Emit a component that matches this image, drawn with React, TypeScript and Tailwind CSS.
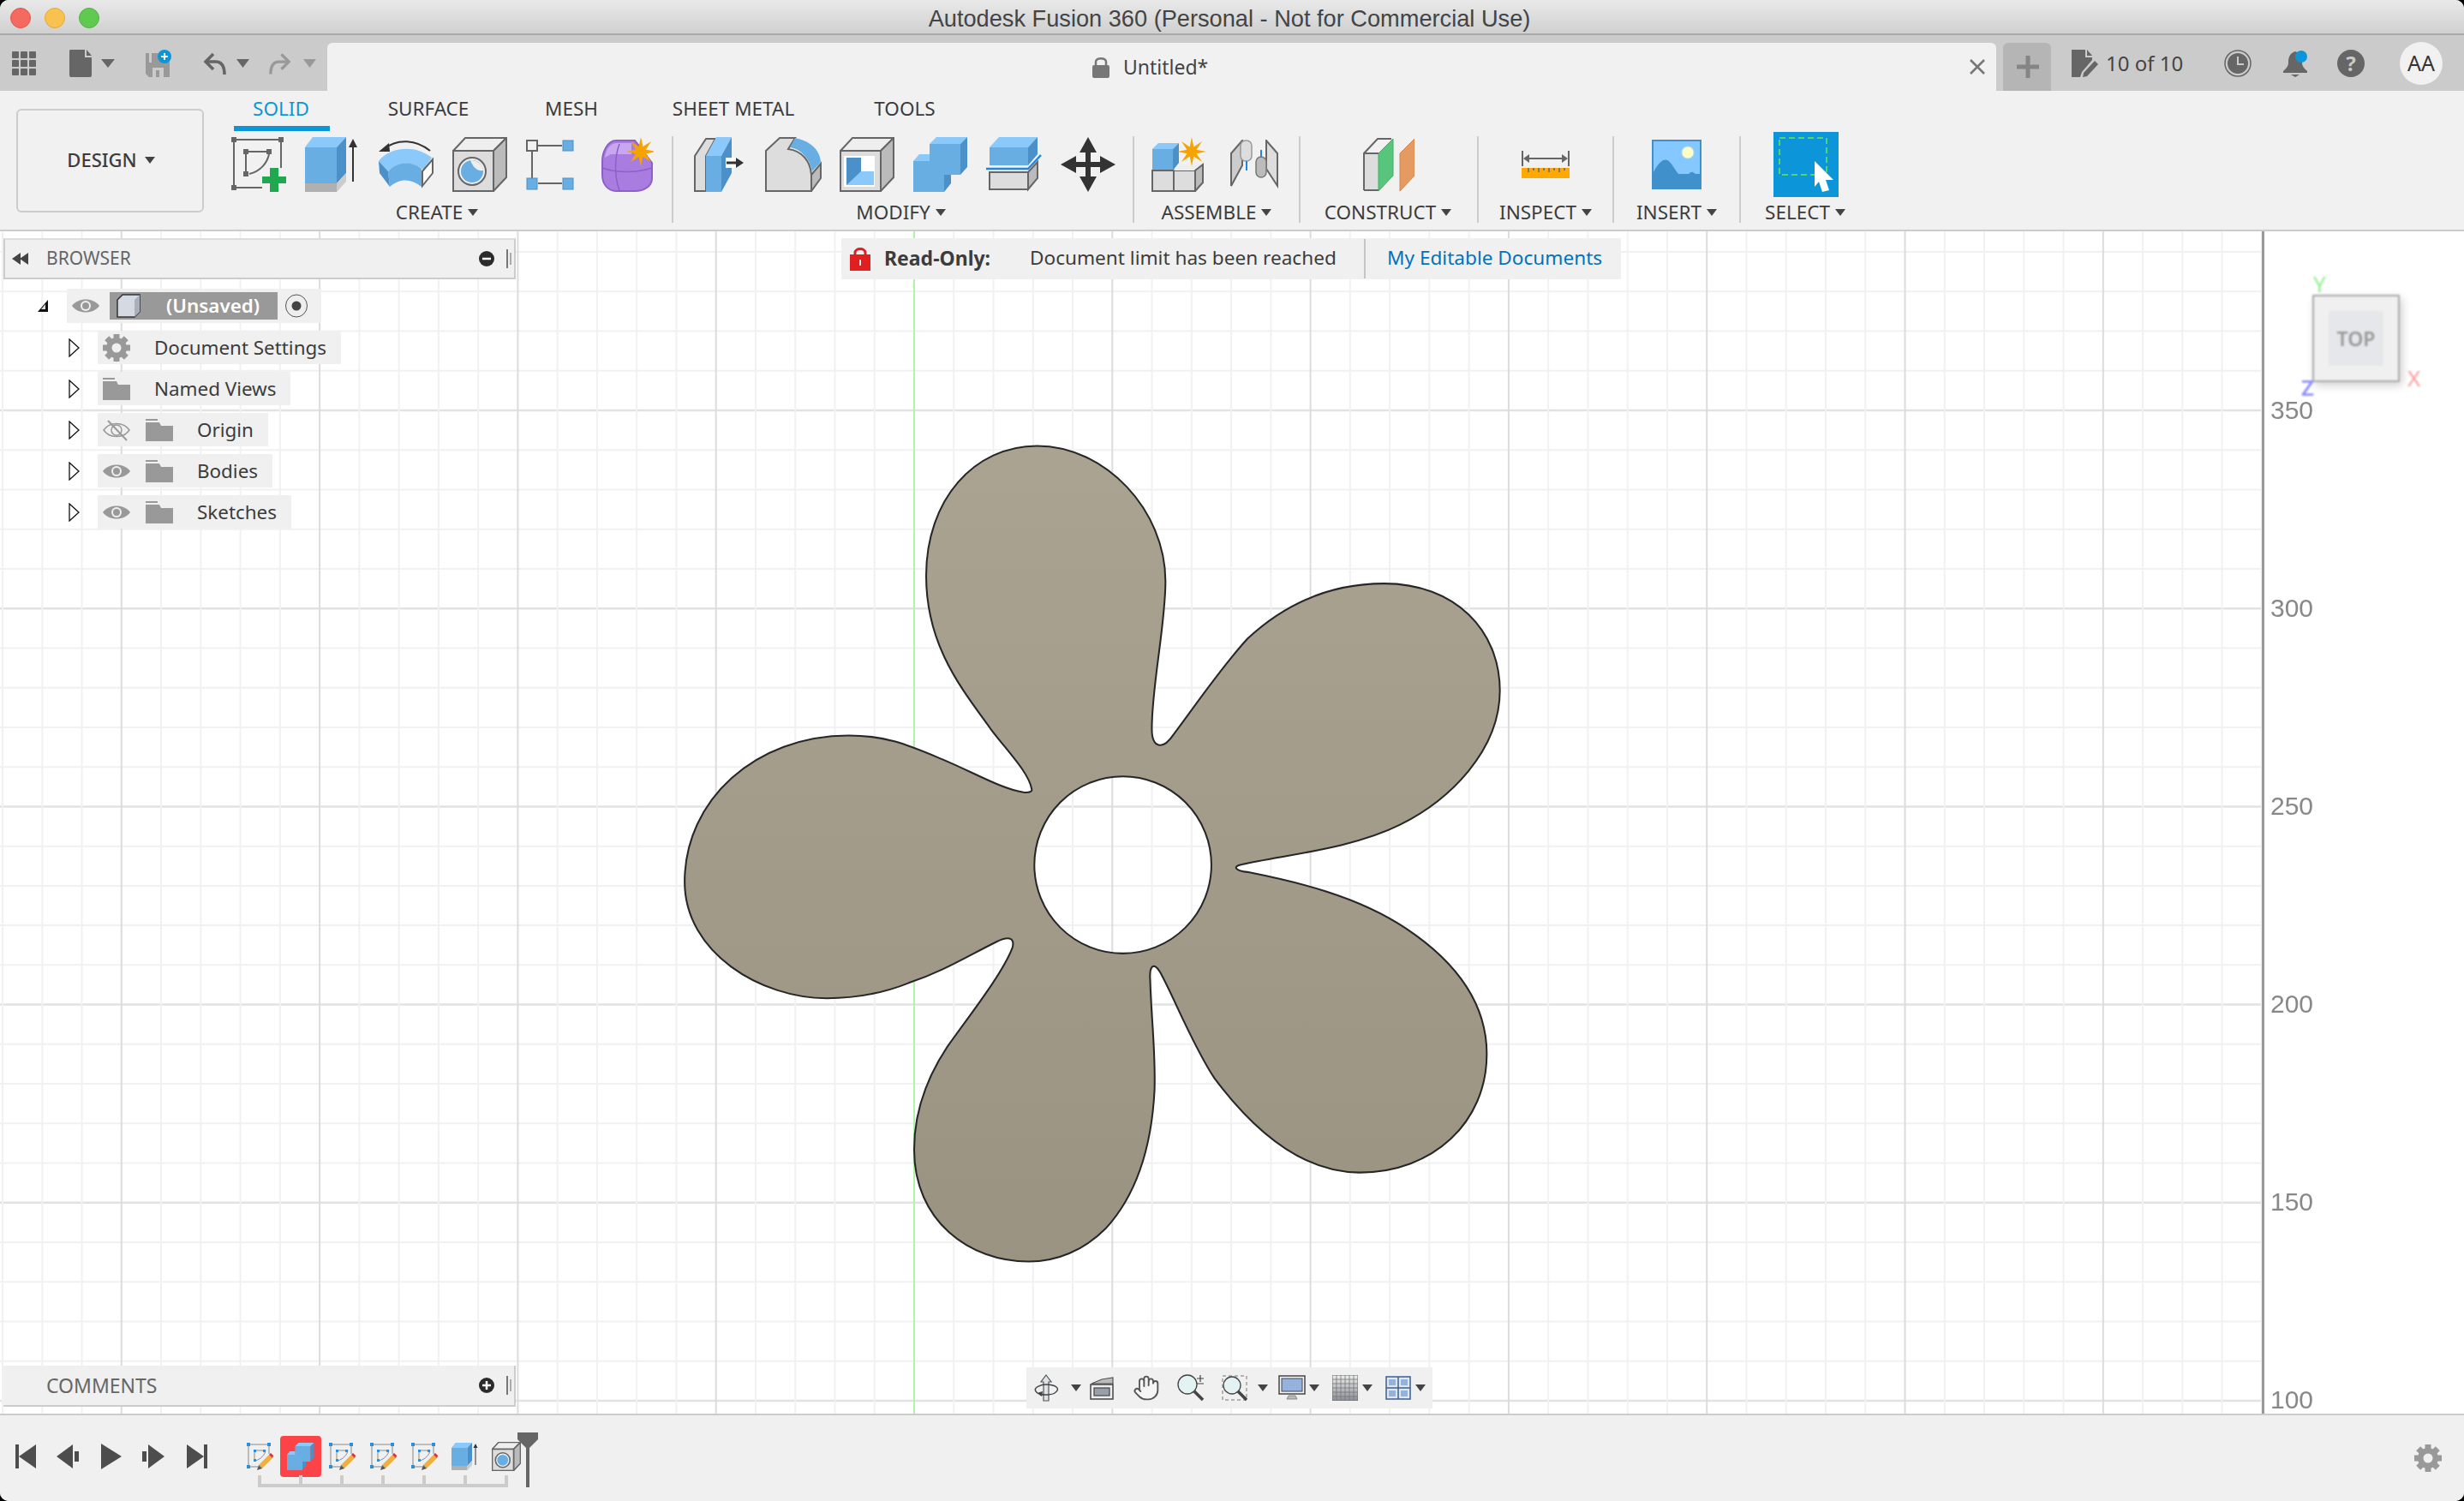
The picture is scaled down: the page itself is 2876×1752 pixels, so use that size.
import React from 'react';
import { Hand } from 'lucide-react';

const BLUE_L = '#8ac9f9';
const BLUE_M = '#69aee3';
const BLUE_D = '#4b90c9';

// grid lines of the sketch plane, in page coordinates (k % 5 === 0 is a major line)
const VERTICALS = Array.from({ length: 58 }, (_, i) => i - 23).map((k) => ({ k, x: 1067 + k * 46.26 })).filter((l) => l.x > 0 && l.x < 2641);
const HORIZONTALS = Array.from({ length: 32 }, (_, i) => i - 5).map((k) => ({ k, y: 479 + k * 46.24 })).filter((l) => l.y > 270 && l.y < 1650);
const SCALE = [
  { label: '350', top: 'top-[197px]' },
  { label: '300', top: 'top-[428px]' },
  { label: '250', top: 'top-[659px]' },
  { label: '200', top: 'top-[890px]' },
  { label: '150', top: 'top-[1121px]' },
  { label: '100', top: 'top-[1352px]' },
];

const starPoints = (cx: number, cy: number, r: number, inner: number, n: number) =>
  Array.from({ length: n * 2 }, (_, i) => {
    const a = (Math.PI * i) / n - Math.PI / 2;
    const q = i % 2 ? inner : r;
    return `${cx + q * Math.cos(a)},${cy + q * Math.sin(a)}`;
  }).join(' ');

const Caret = ({ w = 12, h = 8, color = '#444', className = '' }: { w?: number; h?: number; color?: string; className?: string }) => (
  <svg width={w} height={h} viewBox="0 0 12 8" preserveAspectRatio="none" className={className}>
    <polygon points="0,0 12,0 6,8" fill={color} />
  </svg>
);

const Gear = ({ size = 32, color = '#999' }: { size?: number; color?: string }) => (
  <svg width={size} height={size} viewBox="0 0 32 32">
    {[0, 45, 90, 135].map((a) => (
      <rect key={a} x="12.5" y="0" width="7" height="32" fill={color} transform={`rotate(${a} 16 16)`} />
    ))}
    <circle cx="16" cy="16" r="12" fill={color} />
    <circle cx="16" cy="16" r="5.5" fill="#f0f0f0" />
  </svg>
);

const Eye = () => (
  <svg width="32" height="24" viewBox="0 0 32 24">
    <path d="M0 12 C7 2 25 2 32 12 C25 22 7 22 0 12 Z" fill="#999" />
    <circle cx="16" cy="12" r="6" fill="#f0f0f0" />
    <circle cx="16" cy="12" r="4" fill="#999" />
  </svg>
);

const EyeOff = () => (
  <svg width="32" height="26" viewBox="0 0 32 26" fill="none" stroke="#999" strokeWidth="1.5">
    <path d="M1 13 C8 3 24 3 31 13 C24 23 8 23 1 13 Z" />
    <circle cx="16" cy="13" r="6" />
    <path d="M6 2 L28 25" strokeWidth="2" />
  </svg>
);

const Folder = () => (
  <svg width="32" height="26" viewBox="0 0 32 26">
    <path d="M0 0 H14 V2 H0 Z" fill="#999" />
    <path d="M0 4 H16 L18 8 H32 V26 H0 Z" fill="#999" />
  </svg>
);

const TreeArrow = () => (
  <svg width="13" height="22" viewBox="0 0 13 22">
    <polygon points="1,1 12,11 1,21" fill="#fff" stroke="#111" strokeWidth="1.3" />
  </svg>
);

const Cube = ({ w = 64, kind }: { w?: number; kind: 'hole' | 'shell' }) => (
  <svg width={w} height={64} viewBox="0 0 64 64">
    <polygon points="1,16 15,1 63,1 48,16" fill="#eee" stroke="#666" strokeWidth="2" />
    <polygon points="48,16 63,1 63,47 48,63" fill="#bbb" stroke="#666" strokeWidth="2" />
    <rect x="1" y="16" width="47" height="47" fill="#ddd" stroke="#666" strokeWidth="2" />
    {kind === 'hole' ? (
      <>
        <circle cx="23" cy="40" r="16" fill="#eee" stroke="#666" strokeWidth="2" />
        <circle cx="23" cy="40" r="13" fill={BLUE_M} />
        <path d="M21 27 C24 36 30 40 36 39 C36 33 30 27 21 27 Z" fill="#eee" />
      </>
    ) : (
      <>
        <rect x="5" y="22" width="36" height="36" fill="#fff" />
        <rect x="8" y="24" width="17" height="32" fill={BLUE_D} />
        <polygon points="8,56 25,40 40,40 40,56" fill={BLUE_L} />
      </>
    )}
  </svg>
);

const SketchIcon = () => (
  <svg width="64" height="64" viewBox="0 0 64 64" fill="none">
    <g fill="#666">
      <rect x="0" y="0" width="6" height="6" />
      <rect x="55" y="0" width="6" height="6" />
      <rect x="0" y="56" width="6" height="6" />
      <rect x="14" y="14" width="6" height="6" />
      <rect x="41" y="14" width="6" height="6" />
      <rect x="14" y="40" width="6" height="6" />
    </g>
    <path d="M6 3 H55 M3 6 V56 M58 6 V36 M6 59 H36 M20 17 H41 M17 20 V40 M21 43 C34 40 42 30 44 20" stroke="#666" strokeWidth="2" />
    <path d="M45 36 H55 V46 H64 V54 H55 V64 H45 V54 H36 V46 H45 Z" fill="#1fa84f" />
  </svg>
);

const ExtrudeIcon = ({ size = 64 }: { size?: number }) => (
  <svg width={size} height={size} viewBox="0 0 64 64">
    <polygon points="0,12 9,0 48,0 37,12" fill={BLUE_L} />
    <rect x="0" y="12" width="37" height="42" fill={BLUE_M} />
    <polygon points="37,12 48,0 48,42 37,54" fill={BLUE_D} />
    <polygon points="0,54 37,54 37,64 0,64" fill="#b0b0b0" />
    <polygon points="37,54 48,42 48,52 37,64" fill="#ccc" />
    <path d="M56 10 V52" stroke="#333" strokeWidth="2" />
    <polygon points="56,2 51,12 61,12" fill="#333" />
  </svg>
);

const RevolveIcon = () => (
  <svg width="64" height="64" viewBox="0 0 64 64">
    <path d="M6 14 C22 1 44 3 60 16" fill="none" stroke="#333" strokeWidth="2" />
    <polygon points="0,17 12,7 13,17" fill="#333" />
    <path d="M0 28 C12 12 42 8 62 24 L52 38 C40 28 22 28 11 40 Z" fill={BLUE_L} />
    <path d="M11 40 C22 28 40 28 50 37 L50 58 C38 48 24 48 13 58 Z" fill={BLUE_M} />
    <polygon points="0,28 11,40 13,58 1,42" fill={BLUE_D} />
    <polygon points="51,40 63,26 63,42 51,57" fill="#fff" stroke="#666" strokeWidth="2" />
  </svg>
);

const PatternIcon = () => (
  <svg width="56" height="60" viewBox="0 0 56 60" className="-translate-x-[4px]">
    <path d="M14 8 H42 M7 15 V46 M14 52 H42" stroke="#666" strokeWidth="2" />
    <rect x="1" y="2" width="12" height="12" fill="#f1f1f1" stroke="#666" strokeWidth="2" />
    <rect x="43" y="2" width="12" height="12" fill={BLUE_M} stroke={BLUE_D} strokeWidth="1" />
    <rect x="1" y="46" width="12" height="13" fill={BLUE_M} stroke={BLUE_D} strokeWidth="1" />
    <rect x="43" y="46" width="12" height="13" fill={BLUE_M} stroke={BLUE_D} strokeWidth="1" />
  </svg>
);

const FormIcon = () => (
  <svg width="62" height="64" viewBox="0 0 62 64">
    <path d="M2 28 C2 18 8 4 18 4 H40 L60 30 V48 C60 58 50 63 40 63 H18 C8 63 2 54 2 44 Z" fill="#a97de0" stroke="#8e5fc8" strokeWidth="2" />
    <path d="M5 24 C7 10 14 7 20 7 H36 V20 H12 Z" fill="#c7a8f0" />
    <path d="M2 36 C20 42 40 42 60 36 M22 8 C16 24 16 46 22 62" fill="none" stroke="#8e5fc8" strokeWidth="1.5" />
    <polygon points={starPoints(47, 17, 17, 6.5, 8)} fill="#f5a300" />
  </svg>
);

const PressPullIcon = () => (
  <svg width="60" height="64" viewBox="0 0 60 64">
    <path d="M1 63 V22 L14 2 H25 L14 22 V63 Z" fill="#ddd" stroke="#666" strokeWidth="2" />
    <polygon points="14,22 26,0 44,0 32,22" fill={BLUE_L} />
    <rect x="14" y="22" width="18" height="42" fill={BLUE_M} />
    <polygon points="32,22 44,0 44,42 32,64" fill={BLUE_D} />
    <rect x="37" y="24" width="14" height="12" fill="#fff" />
    <path d="M38 30 H51" stroke="#333" strokeWidth="3" />
    <polygon points="49,24 58,30 49,36" fill="#333" />
  </svg>
);

const FilletIcon = () => (
  <svg width="68" height="64" viewBox="0 0 68 64">
    <path d="M2 63 V16 L18 1 H36 L28 14 C44 16 54 28 55 44 V63 Z" fill="#ddd" stroke="#666" strokeWidth="2" />
    <polygon points="55,44 66,31 66,48 55,63" fill="#bbb" stroke="#666" strokeWidth="2" />
    <path d="M30 12 L36 1 C52 4 65 14 66 29 L56 40 C53 25 43 14 30 12 Z" fill={BLUE_M} />
  </svg>
);

const CombineIcon = ({ size = 64 }: { size?: number }) => (
  <svg width={size} height={size} viewBox="0 0 64 64">
    <polygon points="19,8 27,0 63,0 55,8" fill={BLUE_L} />
    <rect x="19" y="8" width="36" height="36" fill={BLUE_M} />
    <polygon points="55,8 63,0 63,35 55,44" fill={BLUE_D} />
    <polygon points="0,28 7,20 19,20 19,28" fill={BLUE_L} />
    <rect x="0" y="28" width="36" height="36" fill={BLUE_M} />
    <polygon points="36,44 44,44 44,54 36,64" fill={BLUE_D} />
  </svg>
);

const SplitIcon = () => (
  <svg width="66" height="64" viewBox="0 0 66 64">
    <polygon points="4,12 15,0 60,0 49,12" fill={BLUE_L} />
    <rect x="4" y="12" width="45" height="21" fill={BLUE_M} />
    <polygon points="49,12 60,0 60,20 49,33" fill={BLUE_D} />
    <path d="M0 37 H49 L64 21" fill="none" stroke="#1e88e0" strokeWidth="2.5" />
    <path d="M49 41 L60 29 V48 L49 61 Z" fill="#bbb" stroke="#666" strokeWidth="2" />
    <rect x="4" y="41" width="45" height="20" fill="#ddd" stroke="#666" strokeWidth="2" />
  </svg>
);

const MoveIcon = () => (
  <svg width="64" height="64" viewBox="0 0 64 64">
    <path d="M32 0 L42 18 H35 V29 H46 V22 L64 32 L46 42 V35 H35 V46 H42 L32 64 L22 46 H29 V35 H18 V42 L0 32 L18 22 V29 H29 V18 H22 Z" fill="#333" />
  </svg>
);

const AssembleIcon = () => (
  <svg width="64" height="64" viewBox="0 0 64 64">
    <polygon points="1,14 8,7 32,7 25,14" fill={BLUE_L} />
    <rect x="1" y="14" width="24" height="25" fill={BLUE_M} />
    <polygon points="25,14 32,7 32,30 25,39" fill={BLUE_D} />
    <rect x="1" y="39" width="25" height="24" fill="#ddd" stroke="#666" strokeWidth="2" />
    <rect x="26" y="39" width="25" height="24" fill="#ddd" stroke="#666" strokeWidth="2" />
    <polygon points="26,39 35,32 60,32 51,39" fill="#eee" />
    <polygon points="51,39 60,32 60,53 51,63" fill="#bbb" stroke="#666" strokeWidth="2" />
    <polygon points={starPoints(47, 17, 17, 6, 8)} fill="#f5a300" />
  </svg>
);

const JointIcon = () => (
  <svg width="56" height="58" viewBox="0 0 56 58">
    <polygon points="1,16 14,1 14,30 1,54" fill="#ccc" stroke="#666" strokeWidth="2" />
    <rect x="12" y="1" width="13" height="24" rx="6" fill="#ddd" stroke="#999" strokeWidth="1.5" />
    <path d="M19 25 V36 M36 12 V26" stroke="#1e88e0" strokeWidth="2" />
    <polygon points="55,16 42,1 42,34 55,54" fill="#ddd" stroke="#666" strokeWidth="2" />
    <rect x="30" y="20" width="12" height="24" rx="6" fill="#bbb" stroke="#777" strokeWidth="1.5" />
  </svg>
);

const ConstructIcon = () => (
  <svg width="60" height="62" viewBox="0 0 60 62">
    <path d="M1 61 V18 L17 1 H33" fill="none" stroke="#666" strokeWidth="2" />
    <rect x="2" y="18" width="16" height="42" fill="#ddd" />
    <path d="M1 61 H18" stroke="#666" strokeWidth="2" />
    <path d="M1 18 H18" stroke="#666" strokeWidth="2" />
    <polygon points="18,18 35,1 35,44 18,62" fill="#57c67c" stroke="#3fae64" strokeWidth="1" />
    <polygon points="43,18 60,1 60,44 43,62" fill="#e59a62" stroke="#cf8750" strokeWidth="1" />
  </svg>
);

const InspectIcon = () => (
  <svg width="56" height="32" viewBox="0 0 56 32">
    <path d="M1 0 V18 M55 0 V18 M6 9 H50" stroke="#666" strokeWidth="2" />
    <polygon points="2,9 9,4 9,14" fill="#666" />
    <polygon points="54,9 47,4 47,14" fill="#666" />
    <rect x="0" y="20" width="56" height="12" fill="#ffa900" />
    <path d="M8 20 V25 M14 20 V23 M20 20 V25 M26 20 V23 M32 20 V25 M38 20 V23 M44 20 V25 M50 20 V23" stroke="#666" strokeWidth="1.5" />
  </svg>
);

const InsertIcon = () => (
  <svg width="58" height="58" viewBox="0 0 58 58">
    <rect x="0" y="0" width="58" height="58" fill="#4090cc" />
    <rect x="2" y="2" width="54" height="38" fill="#85c8ff" />
    <path d="M2 38 C8 26 14 22 18 24 C24 26 30 44 38 44 C42 44 44 36 48 38 C52 40 54 44 56 46 V58 H2 Z" fill="#4090cc" />
    <circle cx="42" cy="15" r="7" fill="#ffffc8" stroke="#b8dcf0" strokeWidth="1" />
  </svg>
);

const SelectIcon = () => (
  <svg width="76" height="76" viewBox="0 0 76 76">
    <rect x="0" y="0" width="76" height="76" fill="#0c96d9" />
    <rect x="7" y="7" width="55" height="43" fill="none" stroke="#55d46a" strokeWidth="2" strokeDasharray="7 4" />
    <polygon points="48,34 70,56 61,56 65,68 57,70 53,58 48,64" fill="#fff" />
  </svg>
);

// small sketch marker used on the timeline
const TimelineSketch = () => (
  <svg width="32" height="34" viewBox="0 0 32 34" fill="none">
    <path d="M3 3 H27 M3 3 V29 M27 3 V14 M3 29 H14 M10 10 H21 M10 10 V21 M11 22 C18 20 22 15 23 10" stroke="#888" strokeWidth="1" />
    <g fill="#2b8fe0">
      <rect x="1" y="1" width="4" height="4" />
      <rect x="25" y="1" width="4" height="4" />
      <rect x="1" y="27" width="4" height="4" />
      <rect x="9" y="9" width="3" height="3" />
      <rect x="20" y="9" width="3" height="3" />
      <rect x="9" y="20" width="3" height="3" />
    </g>
    <path d="M15 27 L27 15 L31 19 L19 31 Z" fill="#f0b040" />
    <path d="M27 15 L29 13 L32 16 L31 19 Z" fill="#e62b2b" />
    <path d="M15 27 L19 31 L13 33 Z" fill="#555" />
  </svg>
);

const TimelineHole = () => (
  <svg width="34" height="34" viewBox="0 0 64 64">
    <polygon points="1,16 15,1 63,1 48,16" fill="#eee" stroke="#666" strokeWidth="3" />
    <polygon points="48,16 63,1 63,47 48,63" fill="#bbb" stroke="#666" strokeWidth="3" />
    <rect x="1" y="16" width="47" height="47" fill="#ddd" stroke="#666" strokeWidth="3" />
    <circle cx="24" cy="40" r="16" fill="#eee" stroke="#666" strokeWidth="3" />
    <circle cx="24" cy="40" r="12" fill={BLUE_M} />
  </svg>
);

const TitleBar = () => (
  <div className="grid grid-cols-[1fr_auto_1fr] items-center h-[41px] shrink-0 border-b-2 border-[#a9a9a9] bg-gradient-to-b from-[#e9e9e9] to-[#d0d0d0]">
    <div className="flex gap-[16px] pl-[12px]">
      <span className="w-[24px] h-[24px] rounded-full bg-[#f46a60] border border-[#e0554b]" />
      <span className="w-[24px] h-[24px] rounded-full bg-[#f9c14f] border border-[#e2a93c]" />
      <span className="w-[24px] h-[24px] rounded-full bg-[#60c94f] border border-[#4fb53f]" />
    </div>
    <div className="font-['Liberation_Sans',sans-serif] text-[27.2px] text-[#444] pr-[6px] pt-[2px]">Autodesk Fusion 360 (Personal - Not for Commercial Use)</div>
    <div />
  </div>
);

const TabBar = () => (
  <div className="flex items-center h-[65px] shrink-0 bg-[#cbcbcb]">
    <div className="flex items-center w-[382px] pl-[14px]">
      <svg width="28" height="28" viewBox="0 0 28 28" fill="#666">
        {[0, 10, 20].map((y) =>
          [0, 10, 20].map((x) => <rect key={`${x}-${y}`} x={x} y={y} width="8" height="8" rx="1" />)
        )}
      </svg>
      <svg width="26" height="32" viewBox="0 0 26 32" className="ml-[39px]">
        <path d="M1 0 H18 V9 H26 V30 Q26 32 24 32 H2 Q0 32 0 30 V1 Z" fill="#666" />
        <polygon points="20,0 26,7 20,7" fill="#666" />
      </svg>
      <Caret w={16} h={10} color="#666" className="ml-[11px]" />
      <svg width="30" height="32" viewBox="0 0 30 32" className="ml-[36px]">
        <path d="M0 4 H24 L28 8 V32 H4 L0 28 Z" fill="#999" />
        <rect x="8" y="21" width="13" height="11" fill="#cbcbcb" />
        <rect x="12" y="24" width="4" height="8" fill="#999" />
        <rect x="4" y="4" width="3" height="11" fill="#cbcbcb" />
        <circle cx="22" cy="8" r="8" fill="#0c96d9" />
        <path d="M22 4 V12 M18 8 H26" stroke="#fff" strokeWidth="2" />
      </svg>
      <svg width="27" height="26" viewBox="0 0 27 26" fill="none" stroke="#666" strokeWidth="3.5" className="ml-[37px]">
        <path d="M12 2 L3 11 L12 20" />
        <path d="M3 11 H15 Q25 11 25 26" />
      </svg>
      <Caret w={15} h={10} color="#666" className="ml-[12px]" />
      <svg width="26" height="26" viewBox="0 0 27 26" fill="none" stroke="#999" strokeWidth="3.5" className="ml-[23px]">
        <path d="M15 2 L24 11 L15 20" />
        <path d="M24 11 H12 Q2 11 2 26" />
      </svg>
      <Caret w={15} h={10} color="#999" className="ml-[14px]" />
    </div>
    <div className="flex items-center w-[1948px] h-[56px] self-end rounded-t-[6px] bg-[#f1f1f1]">
      <svg width="24" height="26" viewBox="0 0 24 26" className="ml-[891px]" fill="none">
        <path d="M6 12 V7 C6 2 18 2 18 7 V12" stroke="#777" strokeWidth="2.5" />
        <rect x="2" y="11" width="20" height="15" rx="2" fill="#777" />
      </svg>
      <span className="ml-[14px] text-[23px] text-[#444]">Untitled*</span>
      <svg width="18" height="18" viewBox="0 0 18 18" className="ml-auto mr-[13px]">
        <path d="M1 1 L17 17 M17 1 L1 17" stroke="#777" strokeWidth="2.5" />
      </svg>
    </div>
    <div className="flex items-center justify-center w-[56px] h-[56px] ml-[8px] self-end rounded-t-[6px] bg-[#b5b5b5]">
      <svg width="26" height="26" viewBox="0 0 26 26" className="translate-x-[1px]">
        <path d="M13 0 V26 M0 13 H26" stroke="#858585" strokeWidth="5" />
      </svg>
    </div>
    <svg width="32" height="32" viewBox="0 0 32 32" className="ml-[24px]">
      <path d="M0 0 H16 V9 H24 V12 L12 26 L10 32 H0 Z" fill="#666" />
      <polygon points="18,0 24,7 18,7" fill="#666" />
      <path d="M27 13 L31 17 L18 31 L13 32 L14 27 Z" fill="#666" />
    </svg>
    <span className="ml-[8px] w-[90px] text-[24px] text-[#444] whitespace-nowrap">10 of 10</span>
    <svg width="32" height="32" viewBox="0 0 32 32" className="ml-[48px]" fill="none">
      <circle cx="16" cy="16" r="15" stroke="#666" strokeWidth="1.5" />
      <circle cx="16" cy="16" r="12" fill="#666" />
      <path d="M16 8 V17 H23" stroke="#cbcbcb" strokeWidth="2" />
    </svg>
    <svg width="28" height="32" viewBox="0 0 28 32" className="ml-[37px]">
      <path d="M14 2 C7 4 6 10 6 15 C6 20 3 22 0 25 V27 H28 V25 C25 22 22 20 22 15 C22 10 21 4 14 2 Z" fill="#666" />
      <path d="M9 29 H19 L14 32 Z" fill="#666" />
      <circle cx="21" cy="8" r="7" fill="#0c96d9" />
    </svg>
    <div className="ml-[35px] flex items-center justify-center w-[32px] h-[32px] rounded-full bg-[#666] text-[24px] font-bold text-[#cbcbcb]">?</div>
    <div className="ml-[41px] flex items-center justify-center w-[50px] h-[50px] rounded-full bg-[#f1f1f1] text-[25px] text-[#333]">AA</div>
  </div>
);

const GroupLabel = ({ label, className = '' }: { label: string; className?: string }) => (
  <div className={`flex items-center justify-center gap-[6px] h-[28px] mt-[9px] text-[22.5px] leading-none ${className}`}>
    {label}
    <Caret w={12} h={8} />
  </div>
);

const Divider = () => <div className="w-[2px] h-full bg-[#ccc] shrink-0" />;

const Ribbon = () => (
  <div className="flex h-[164px] shrink-0 border-b-2 border-[#ccc] bg-[#f1f1f1]">
    <div className="flex items-center justify-center gap-[9px] ml-[19px] mt-[21px] w-[219px] h-[121px] pb-[2px] pl-[2px] rounded-[6px] border-2 border-[#ccc] text-[22px] font-medium">
      DESIGN
      <Caret w={12} h={8} />
    </div>
    <div className="flex flex-col ml-[20px]">
      <div className="flex h-[47px] pl-[15px] text-[22.5px]">
        <div className="flex items-center justify-center w-[112px] pt-[1px] pr-[2px] border-b-[6px] border-[#0a96d8] text-[#0a96d8]">SOLID</div>
        <div className="flex items-center justify-center w-[120px] ml-[55px] pb-[5px]">SURFACE</div>
        <div className="flex items-center justify-center w-[114px] ml-[50px] pb-[5px]">MESH</div>
        <div className="flex items-center justify-center w-[172px] ml-[46px] pb-[5px]">SHEET METAL</div>
        <div className="flex items-center justify-center w-[112px] ml-[58px] pb-[5px]">TOOLS</div>
      </div>
      <div className="flex h-[101px] mt-[6px]">
        <div className="w-[526px]">
          <div className="grid grid-cols-[repeat(6,86px)] items-center justify-items-center h-[66px] pl-px">
            <SketchIcon />
            <ExtrudeIcon />
            <RevolveIcon />
            <Cube kind="hole" />
            <PatternIcon />
            <FormIcon />
          </div>
          <GroupLabel label="CREATE" className="pr-[22px]" />
        </div>
        <Divider />
        <div className="w-[536px]">
          <div className="grid grid-cols-[repeat(6,86px)] items-center justify-items-center h-[66px] pl-[11px]">
            <PressPullIcon />
            <FilletIcon />
            <Cube kind="shell" />
            <CombineIcon />
            <SplitIcon />
            <MoveIcon />
          </div>
          <GroupLabel label="MODIFY" className="pr-[5px]" />
        </div>
        <Divider />
        <div className="w-[192px]">
          <div className="grid grid-cols-[repeat(2,88px)] items-center justify-items-center h-[66px] pl-[8px]">
            <AssembleIcon />
            <JointIcon />
          </div>
          <GroupLabel label="ASSEMBLE" />
        </div>
        <Divider />
        <div className="w-[206px]">
          <div className="flex items-center justify-center h-[66px]"><ConstructIcon /></div>
          <GroupLabel label="CONSTRUCT" className="pr-[2px]" />
        </div>
        <Divider />
        <div className="w-[156px]">
          <div className="flex items-center justify-center h-[66px]"><InspectIcon /></div>
          <GroupLabel label="INSPECT" />
        </div>
        <Divider />
        <div className="w-[146px]">
          <div className="flex items-center justify-center h-[66px]"><InsertIcon /></div>
          <GroupLabel label="INSERT" />
        </div>
        <Divider />
        <div className="w-[152px]">
          <div className="flex items-center justify-center h-[66px]"><SelectIcon /></div>
          <GroupLabel label="SELECT" className="pr-[2px]" />
        </div>
      </div>
    </div>
  </div>
);

const PanelHandle = ({ plus }: { plus?: boolean }) => (
  <div className="flex items-center ml-auto">
    <svg width="18" height="18" viewBox="0 0 18 18">
      <circle cx="9" cy="9" r="9" fill="#2b2b2b" />
      <path d={plus ? 'M4 9 H14 M9 4 V14' : 'M4 9 H14'} stroke="#fff" strokeWidth="2.5" />
    </svg>
    <div className="flex gap-[2px] ml-[14px] mr-[3px]">
      <span className="w-[2px] h-[22px] bg-[#777]" />
      <span className="w-[2px] h-[14px] mt-[4px] bg-[#aaa]" />
    </div>
  </div>
);

const TreeRow = ({ children }: { children: React.ReactNode }) => (
  <div className="flex items-center h-[39px] mb-[9px]">
    <div className="ml-[76px] w-[13px] flex"><TreeArrow /></div>
    <div className="flex items-center h-full ml-[21px] pl-[6px] pr-[17px] bg-[#f0f0f0] text-[22.4px]">{children}</div>
  </div>
);

const BrowserPanel = () => (
  <div className="absolute left-[4px] top-[8px] w-[598px]">
    <div className="flex items-center h-[48px] border-2 border-[#ccc] border-t-[#ddd] bg-[#f0f0f0] text-[21px] text-[#666]">
      <svg width="20" height="14" viewBox="0 0 20 14" className="ml-[8px]">
        <polygon points="0,7 10,0 10,14" fill="#444" />
        <polygon points="9,7 19,0 19,14" fill="#444" />
      </svg>
      <span className="ml-[20px]">BROWSER</span>
      <PanelHandle />
    </div>
    <div className="flex items-center h-[40px] mt-[11px] mb-[9px]">
      <svg width="14" height="16" viewBox="0 0 14 16" className="ml-[39px]">
        <polygon points="13,1 13,15 1,15" fill="#111" />
        <polygon points="10,6 10,12 5,12" fill="#ddd" />
      </svg>
      <div className="flex items-center h-full w-[297px] ml-[21px] pl-[6px] bg-[#f0f0f0]">
        <Eye />
        <div className="flex items-center h-[32px] w-[196px] ml-[12px] bg-[#999] text-[22.4px] font-semibold text-white">
          <svg width="28" height="28" viewBox="0 0 28 28" className="ml-[8px]">
            <path d="M1 7 L7 1 H27 V21 L21 27 H1 Z" fill="#d5dae2" stroke="#333" strokeWidth="1.5" />
            <path d="M21 7 L27 1 V21 L21 27 Z" fill="#aab0bb" />
          </svg>
          <span className="ml-[30px]">(Unsaved)</span>
        </div>
        <svg width="26" height="28" viewBox="0 0 26 28" className="ml-[9px]">
          <ellipse cx="13" cy="14" rx="12.5" ry="13" fill="#eee" stroke="#555" strokeWidth="1" />
          <circle cx="13" cy="14" r="5.5" fill="#444" />
        </svg>
      </div>
    </div>
    <TreeRow>
      <Gear />
      <span className="ml-[28px]">Document Settings</span>
    </TreeRow>
    <TreeRow>
      <Folder />
      <span className="ml-[28px]">Named Views</span>
    </TreeRow>
    <TreeRow>
      <EyeOff />
      <span className="ml-[18px]"><Folder /></span>
      <span className="ml-[28px]">Origin</span>
    </TreeRow>
    <TreeRow>
      <Eye />
      <span className="ml-[18px]"><Folder /></span>
      <span className="ml-[28px]">Bodies</span>
    </TreeRow>
    <TreeRow>
      <Eye />
      <span className="ml-[18px]"><Folder /></span>
      <span className="ml-[28px]">Sketches</span>
    </TreeRow>
  </div>
);

const ReadOnlyBanner = () => (
  <div className="absolute left-[982px] top-[8px] flex items-center w-[910px] h-[48px] bg-[#f0f0f0] text-[22.6px]">
    <svg width="24" height="28" viewBox="0 0 24 28" className="ml-[10px]" fill="none">
      <path d="M6 11 V7 C6 1 18 1 18 7 V11" stroke="#e02020" strokeWidth="3" />
      <rect x="0" y="9" width="24" height="19" fill="#e02020" />
      <rect x="11" y="15" width="2" height="7" fill="#fff" />
    </svg>
    <span className="ml-[16px] mb-[2px] font-bold w-[170px] text-[23px]">Read-Only:</span>
    <span className="mb-[2px] w-[390px]">Document limit has been reached</span>
    <div className="w-[2px] h-[46px] bg-[#c4c4c4]" />
    <span className="ml-[25px] mb-[2px] text-[#0073ba]">My Editable Documents</span>
  </div>
);

const NavBar = () => (
  <div className="absolute left-[1198px] bottom-[6px] flex items-center w-[474px] h-[48px] bg-[#f0f0f0]">
    <svg width="30" height="32" viewBox="0 0 30 32" className="ml-[8px]">
      <path d="M15 1 L21 9 H18 V31 H12 V9 H9 Z" fill="#dfe3e8" stroke="#555" strokeWidth="1.2" />
      <path d="M5 22 C-4 15 12 12 15 12 C24 12 34 16 25 22 C22 24 12 25 8 23" fill="none" stroke="#444" strokeWidth="1.5" />
      <polygon points="4,22 11,20 10,26" fill="#444" />
    </svg>
    <Caret w={12} h={8} className="ml-[14px]" />
    <svg width="28" height="28" viewBox="0 0 28 28" className="ml-[10px]">
      <path d="M2 9 L14 4 L27 2 V9 Z" fill="#bbb" stroke="#555" strokeWidth="1.2" />
      <rect x="1" y="10" width="26" height="17" fill="#eee" stroke="#444" strokeWidth="1.5" />
      <rect x="5" y="14" width="18" height="9" fill="#9aa0aa" stroke="#444" strokeWidth="1.2" />
    </svg>
    <Hand size={32} strokeWidth={1.4} color="#555" fill="#f5f5f5" className="ml-[22px]" />
    <svg width="32" height="32" viewBox="0 0 32 32" className="ml-[20px]">
      <circle cx="12" cy="12" r="11" fill="#e3f2f2" stroke="#444" strokeWidth="1.3" />
      <path d="M20 20 L30 30" stroke="#444" strokeWidth="3.5" />
      <path d="M27 1 V9 M23 5 H31 M23 11 H31" stroke="#444" strokeWidth="1.2" />
    </svg>
    <svg width="30" height="30" viewBox="0 0 30 30" className="ml-[20px]">
      <rect x="1" y="1" width="28" height="28" fill="none" stroke="#777" strokeWidth="1" strokeDasharray="4 3" />
      <circle cx="12" cy="12" r="10" fill="#e3f2f2" stroke="#444" strokeWidth="1.3" />
      <path d="M19 19 L29 29" stroke="#444" strokeWidth="3.5" />
    </svg>
    <Caret w={12} h={8} className="ml-[12px]" />
    <svg width="32" height="30" viewBox="0 0 32 30" className="ml-[12px]">
      <rect x="1" y="1" width="30" height="21" fill="#f5f5f5" stroke="#444" strokeWidth="1.5" />
      <rect x="4" y="4" width="24" height="15" fill="#94b2dc" stroke="#445" strokeWidth="1" />
      <path d="M12 24 H20 L22 28 H10 Z" fill="#bbb" stroke="#777" strokeWidth="0.8" />
    </svg>
    <Caret w={12} h={8} className="ml-[4px]" />
    <svg width="30" height="30" viewBox="0 0 30 30" className="ml-[15px]">
      <defs>
        <linearGradient id="navGrid" x1="0" y1="0" x2="0" y2="1">
          <stop offset="0" stopColor="#eee" />
          <stop offset="1" stopColor="#8a8f98" />
        </linearGradient>
      </defs>
      <rect x="0" y="0" width="30" height="30" fill="url(#navGrid)" stroke="#666" strokeWidth="1" />
      <path d="M5 0 V30 M10 0 V30 M15 0 V30 M20 0 V30 M25 0 V30 M0 5 H30 M0 10 H30 M0 15 H30 M0 20 H30 M0 25 H30" stroke="#777" strokeWidth="0.8" />
    </svg>
    <Caret w={12} h={8} className="ml-[5px]" />
    <svg width="30" height="28" viewBox="0 0 30 28" className="ml-[15px]">
      <rect x="1" y="1" width="28" height="26" fill="#dfe7f3" stroke="#3b5f8e" strokeWidth="1.5" />
      <path d="M15 1 V27 M1 14 H29" stroke="#3b5f8e" strokeWidth="1.5" />
      <rect x="4" y="4" width="8" height="7" fill="#94b2dc" />
      <rect x="18" y="4" width="8" height="7" fill="#94b2dc" />
      <rect x="4" y="17" width="8" height="7" fill="#94b2dc" />
      <rect x="18" y="17" width="8" height="7" fill="#94b2dc" />
    </svg>
    <Caret w={12} h={8} className="ml-[5px]" />
  </div>
);

const ViewCube = () => (
  <div className="absolute left-[2690px] top-[46px] w-[140px] h-[150px] blur-[0.9px]">
    <div className="absolute left-[9px] top-[28px] flex items-center justify-center w-[102px] h-[102px] border-2 border-[#aaa] bg-[#f0f0f0] shadow-[3px_4px_10px_rgba(0,0,0,0.18)]">
      <div className="flex items-center justify-center w-[64px] h-[64px] bg-[#e6e7ea] text-[23px] font-semibold text-[#999]">TOP</div>
    </div>
    <span className="absolute left-[10px] top-[3px] text-[26px] leading-[24px] text-[#8ff08f]">Y</span>
    <span className="absolute left-[120px] top-[113px] text-[26px] leading-[24px] text-[#ff9a9a]">X</span>
    <span className="absolute left-[-4px] top-[126px] text-[26px] leading-[20px] font-semibold text-[#8f8fff]">Z</span>
  </div>
);

const Viewport = () => (
  <svg className="absolute inset-0 w-full h-full" viewBox="0 270 2876 1380">
    <defs>
      <linearGradient id="flowerFill" x1="0" y1="0" x2="0" y2="1">
        <stop offset="0" stopColor="#aaa391" />
        <stop offset="1" stopColor="#9a9382" />
      </linearGradient>
    </defs>
    {HORIZONTALS.map(({ k, y }) => (
      <line key={k} x1="0" x2="2641" y1={y} y2={y} stroke={k % 5 === 0 ? '#e2e2e2' : '#f1f1f1'} strokeWidth={k % 5 === 0 ? 2.5 : 2} />
    ))}
    {VERTICALS.map(({ k, x }) => (
      <line key={k} y1="270" y2="1650" x1={x} x2={x} stroke={k % 5 === 0 ? '#dcdcdc' : '#f1f1f1'} strokeWidth="2" />
    ))}
    <line x1="1067" x2="1067" y1="270" y2="1650" stroke="#b4f2ac" strokeWidth="2" />
    <g transform="translate(780 500) scale(0.63776)">
      <path
        fill="url(#flowerFill)"
        fillRule="evenodd"
        stroke="#262626"
        strokeWidth="3.2"
        d="M665 660 C660 630 620 590 590 550 C540 480 472 400 472 270 C472 130 560 32 675 32 C800 32 910 150 910 280 C910 360 885 470 885 550 C885 585 905 590 925 560 C970 500 1010 440 1060 385 C1130 320 1210 284 1310 284 C1440 284 1522 370 1522 480 C1522 590 1430 680 1340 725 C1250 770 1130 780 1050 798 C1030 802 1040 810 1060 812 C1150 830 1260 855 1350 915 C1440 975 1498 1050 1498 1145 C1498 1270 1400 1362 1265 1362 C1150 1362 1060 1270 1000 1190 C960 1130 925 1040 900 995 C888 975 880 985 882 1010 C884 1080 892 1140 890 1210 C885 1310 860 1400 800 1465 C760 1505 710 1525 660 1525 C550 1525 450 1450 450 1320 C450 1240 480 1170 530 1105 C570 1050 615 990 630 950 C635 930 620 930 600 940 C540 970 500 995 440 1015 C390 1035 340 1043 290 1043 C170 1043 30 960 30 830 C30 680 160 562 330 562 C400 562 440 580 500 605 C560 630 610 660 650 666 C660 667 667 665 665 660 Z M670 799 A162 162 0 1 0 994 799 A162 162 0 1 0 670 799 Z"
      />
    </g>
  </svg>
);

const Canvas = () => (
  <div className="relative flex-1 overflow-hidden bg-white">
    <Viewport />
    <div className="absolute left-[2640px] top-0 bottom-0 w-[3px] bg-[#999]" />
    {SCALE.map((s) => (
      <span key={s.label} className={`absolute left-[2650px] ${s.top} font-['Liberation_Sans',sans-serif] text-[30px] leading-[24px] text-[#888] blur-[0.5px]`}>
        {s.label}
      </span>
    ))}
    <ViewCube />
    <BrowserPanel />
    <ReadOnlyBanner />
    <NavBar />
    <div className="absolute left-[4px] bottom-[8px] flex items-center w-[598px] h-[48px] border-b-2 border-r-2 border-[#ccc] bg-[#f0f0f0] text-[23px] text-[#666]">
      <span className="ml-[50px]">COMMENTS</span>
      <PanelHandle plus />
    </div>
  </div>
);

const Timeline = () => (
  <div className="relative flex items-start h-[102px] shrink-0 border-t-2 border-[#ccc] bg-[#f0f0f0]">
    <div className="flex items-center h-[96px] pl-[18px]">
      <svg width="24" height="28" viewBox="0 0 24 28" fill="#4d4d4d">
        <rect x="0" y="0" width="4" height="28" />
        <polygon points="4,14 24,0 24,28" />
      </svg>
      <svg width="26" height="28" viewBox="0 0 26 28" fill="#4d4d4d" className="ml-[24px]">
        <polygon points="0,14 19,0 19,28" />
        <rect x="21" y="8" width="5" height="12" />
      </svg>
      <svg width="24" height="30" viewBox="0 0 24 30" fill="#4d4d4d" className="ml-[26px]">
        <polygon points="0,0 24,15 0,30" />
      </svg>
      <svg width="26" height="28" viewBox="0 0 26 28" fill="#4d4d4d" className="ml-[24px]">
        <rect x="0" y="8" width="5" height="12" />
        <polygon points="7,0 26,14 7,28" />
      </svg>
      <svg width="24" height="28" viewBox="0 0 24 28" fill="#4d4d4d" className="ml-[26px]">
        <polygon points="0,0 20,14 0,28" />
        <rect x="20" y="0" width="4" height="28" />
      </svg>
    </div>
    <div className="relative ml-[37px] h-[100px] pt-[24px]">
      <div className="grid grid-cols-[repeat(7,48px)] items-center justify-items-center h-[48px]">
        <TimelineSketch />
        <div className="flex items-center justify-center w-[48px] h-[48px] rounded-[4px] bg-[#fc4348]">
          <CombineIcon size={32} />
        </div>
        <TimelineSketch />
        <TimelineSketch />
        <TimelineSketch />
        <ExtrudeIcon size={32} />
        <TimelineHole />
      </div>
      <svg width="350" height="100" viewBox="0 0 350 100" className="absolute left-0 top-0">
        <path d="M24 70 V82 H312 V70 M72 70 V82 M120 70 V82 M168 70 V82 M216 70 V82 M264 70 V82" fill="none" stroke="#ccc" strokeWidth="4" />
        <polygon points="325,20 349,20 349,28 339,38 335,38 325,28" fill="#666" />
        <rect x="335" y="30" width="4" height="54" fill="#666" />
      </svg>
    </div>
    <div className="ml-auto mr-[26px] mt-[34px]">
      <Gear size={32} color="#999" />
    </div>
  </div>
);

const App = () => {
  return (
    <div className="w-[2876px] h-[1752px] overflow-hidden bg-black font-['Noto_Sans',sans-serif] text-[#3c3c3c]">
      <div className="flex flex-col h-full overflow-hidden rounded-[10px] bg-white">
        <TitleBar />
        <TabBar />
        <Ribbon />
        <Canvas />
        <Timeline />
      </div>
    </div>
  );
};

export default App;
